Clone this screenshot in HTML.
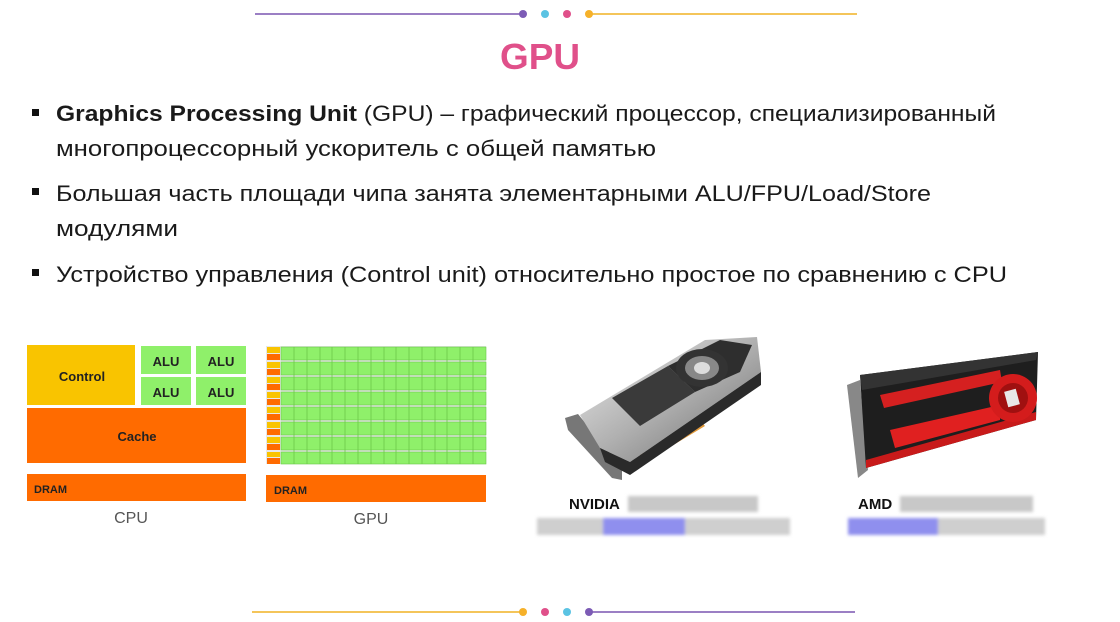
<!DOCTYPE html>
<html><head><meta charset="utf-8"><style>
html,body{margin:0;padding:0;background:#fff;width:1120px;height:622px;overflow:hidden}
svg{display:block}
</style></head><body>
<svg width="1120" height="622" viewBox="0 0 1120 622" xmlns="http://www.w3.org/2000/svg" font-family="Liberation Sans, sans-serif">
<defs>
<filter id="bl" x="-10%" y="-50%" width="120%" height="200%"><feGaussianBlur stdDeviation="1.6"/></filter>
<linearGradient id="sil" x1="0" y1="0" x2="1" y2="1"><stop offset="0" stop-color="#ececec"/><stop offset=".5" stop-color="#b0b0b0"/><stop offset="1" stop-color="#6a6a6a"/></linearGradient>
</defs>
<line x1="255" y1="14" x2="522" y2="14" stroke="#9b7fc4" stroke-width="2"/>
<line x1="590" y1="14" x2="857" y2="14" stroke="#f4c55a" stroke-width="2"/>
<circle cx="523" cy="14" r="4" fill="#7c5bb5"/><circle cx="545" cy="14" r="4" fill="#5bc3e3"/><circle cx="567" cy="14" r="4" fill="#e0508a"/><circle cx="589" cy="14" r="4" fill="#f6b12a"/>
<line x1="252" y1="612" x2="522" y2="612" stroke="#f4c55a" stroke-width="2"/>
<line x1="590" y1="612" x2="855" y2="612" stroke="#9b7fc4" stroke-width="2"/>
<circle cx="523" cy="612" r="4" fill="#f6b12a"/><circle cx="545" cy="612" r="4" fill="#e0508a"/><circle cx="567" cy="612" r="4" fill="#5bc3e3"/><circle cx="589" cy="612" r="4" fill="#7c5bb5"/>
<text x="540" y="69" text-anchor="middle" font-size="36" font-weight="bold" fill="#e0508a" textLength="80" lengthAdjust="spacingAndGlyphs">GPU</text>
<g fill="#111"><rect x="32" y="109" width="7" height="7"/><rect x="32" y="188" width="7" height="7"/><rect x="32" y="269" width="7" height="7"/></g>
<g font-size="22" fill="#1a1a1a">
<text x="56" y="121" textLength="940" lengthAdjust="spacingAndGlyphs"><tspan font-weight="bold">Graphics Processing Unit</tspan> (GPU) – графический процессор, специализированный</text>
<text x="56" y="156" textLength="600" lengthAdjust="spacingAndGlyphs">многопроцессорный ускоритель с общей памятью</text>
<text x="56" y="201" textLength="875" lengthAdjust="spacingAndGlyphs">Большая часть площади чипа занята элементарными ALU/FPU/Load/Store</text>
<text x="56" y="236" textLength="122" lengthAdjust="spacingAndGlyphs">модулями</text>
<text x="56" y="282" textLength="951" lengthAdjust="spacingAndGlyphs">Устройство управления (Control unit) относительно простое по сравнению с CPU</text>
</g>
<g font-weight="bold" font-size="13" fill="#222">
<rect x="27" y="345" width="108" height="60" fill="#f9c400"/>
<text x="82" y="381" text-anchor="middle">Control</text>
<rect x="141" y="346" width="50" height="28" fill="#8ff06a"/><rect x="196" y="346" width="50" height="28" fill="#8ff06a"/>
<rect x="141" y="377" width="50" height="28" fill="#8ff06a"/><rect x="196" y="377" width="50" height="28" fill="#8ff06a"/>
<text x="166" y="366" text-anchor="middle">ALU</text><text x="221" y="366" text-anchor="middle">ALU</text>
<text x="166" y="397" text-anchor="middle">ALU</text><text x="221" y="397" text-anchor="middle">ALU</text>
<rect x="27" y="408" width="219" height="55" fill="#ff6b00"/>
<text x="137" y="441" text-anchor="middle">Cache</text>
<rect x="27" y="474" width="219" height="27" fill="#ff6b00"/>
<text x="34" y="493" font-size="11">DRAM</text>
<rect x="266" y="475" width="220" height="27" fill="#ff6b00"/>
<text x="274" y="494" font-size="11">DRAM</text>
</g>
<text x="131" y="523" text-anchor="middle" font-size="16" fill="#555">CPU</text>
<text x="371" y="524" text-anchor="middle" font-size="16" fill="#555">GPU</text>
<rect x="266" y="346" width="220" height="118" fill="#e8e8e8"/>
<g fill="#8ff06a" stroke="#6cc84a" stroke-width="0.6">
<rect x="281" y="347" width="205" height="13"/><rect x="281" y="362" width="205" height="13"/><rect x="281" y="377" width="205" height="13"/><rect x="281" y="392" width="205" height="13"/><rect x="281" y="407" width="205" height="13"/><rect x="281" y="422" width="205" height="13"/><rect x="281" y="437" width="205" height="13"/><rect x="281" y="452" width="205" height="12"/>
</g>
<g stroke="#6cc84a" stroke-width="0.8">
<line x1="294" y1="347" x2="294" y2="464"/><line x1="307" y1="347" x2="307" y2="464"/><line x1="320" y1="347" x2="320" y2="464"/><line x1="332" y1="347" x2="332" y2="464"/><line x1="345" y1="347" x2="345" y2="464"/><line x1="358" y1="347" x2="358" y2="464"/><line x1="371" y1="347" x2="371" y2="464"/><line x1="384" y1="347" x2="384" y2="464"/><line x1="396" y1="347" x2="396" y2="464"/><line x1="409" y1="347" x2="409" y2="464"/><line x1="422" y1="347" x2="422" y2="464"/><line x1="435" y1="347" x2="435" y2="464"/><line x1="447" y1="347" x2="447" y2="464"/><line x1="460" y1="347" x2="460" y2="464"/><line x1="473" y1="347" x2="473" y2="464"/>
</g>
<g>
<rect x="267" y="347" width="13" height="6" fill="#f9c400"/><rect x="267" y="354" width="13" height="6" fill="#ff6b00"/>
<rect x="267" y="362" width="13" height="6" fill="#f9c400"/><rect x="267" y="369" width="13" height="6" fill="#ff6b00"/>
<rect x="267" y="377" width="13" height="6" fill="#f9c400"/><rect x="267" y="384" width="13" height="6" fill="#ff6b00"/>
<rect x="267" y="392" width="13" height="6" fill="#f9c400"/><rect x="267" y="399" width="13" height="6" fill="#ff6b00"/>
<rect x="267" y="407" width="13" height="6" fill="#f9c400"/><rect x="267" y="414" width="13" height="6" fill="#ff6b00"/>
<rect x="267" y="422" width="13" height="6" fill="#f9c400"/><rect x="267" y="429" width="13" height="6" fill="#ff6b00"/>
<rect x="267" y="437" width="13" height="6" fill="#f9c400"/><rect x="267" y="444" width="13" height="6" fill="#ff6b00"/>
<rect x="267" y="452" width="13" height="5" fill="#f9c400"/><rect x="267" y="458" width="13" height="6" fill="#ff6b00"/>
</g>
<!-- NVIDIA card -->
<g>
<polygon points="565,418 578,414 622,468 622,480 612,478 568,430" fill="#777"/>
<polygon points="640,455 700,420 705,426 645,462" fill="#e39a3a"/>
<polygon points="580,415 705,340 757,337 761,372 630,462 600,448" fill="url(#sil)"/>
<polygon points="600,448 630,462 761,372 761,385 630,475 605,462" fill="#2a2a2a"/>
<polygon points="612,398 668,366 695,392 640,426" fill="#3a3a3a"/>
<polygon points="668,366 720,340 752,345 740,372 695,392" fill="#2e2e2e"/>
<ellipse cx="702" cy="368" rx="26" ry="19" fill="#333"/>
<ellipse cx="702" cy="368" rx="17" ry="12" fill="#888"/>
<ellipse cx="702" cy="368" rx="8" ry="6" fill="#ddd"/>
</g>
<!-- AMD card -->
<g>
<polygon points="847,385 860,380 868,470 858,478" fill="#888"/>
<polygon points="860,375 1038,352 1036,420 866,468" fill="#1e1e1e"/>
<polygon points="860,375 1038,352 1036,360 862,390" fill="#333"/>
<polygon points="880,395 1000,370 1002,382 884,408" fill="#d52020"/>
<polygon points="890,430 1000,405 1000,420 895,448" fill="#e02020"/>
<polygon points="866,460 1036,412 1036,420 866,468" fill="#c81a1a"/>
<circle cx="1013" cy="398" r="24" fill="#d41c1c"/>
<circle cx="1013" cy="398" r="15" fill="#a01010"/>
<rect x="1006" y="390" width="12" height="16" fill="#e8e8e8" transform="rotate(-15 1012 398)"/>
</g>
<text x="569" y="509" font-size="15" font-weight="bold" fill="#111">NVIDIA</text>
<g filter="url(#bl)">
<rect x="628" y="496" width="130" height="16" fill="#c8c8c8"/>
<rect x="537" y="518" width="253" height="17" fill="#cfcfcf"/>
<rect x="603" y="518" width="82" height="17" fill="#8f8fee"/>
<rect x="900" y="496" width="133" height="16" fill="#c8c8c8"/>
<rect x="848" y="518" width="197" height="17" fill="#cfcfcf"/>
<rect x="848" y="518" width="90" height="17" fill="#8f8fee"/>
</g>
<text x="858" y="509" font-size="15" font-weight="bold" fill="#111">AMD</text>
</svg>
</body></html>
